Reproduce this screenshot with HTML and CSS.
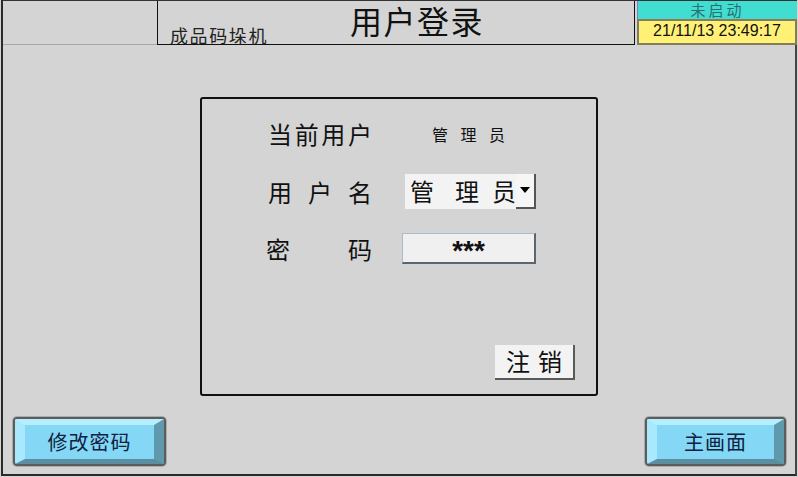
FILE: index.html
```html
<!DOCTYPE html>
<html lang="zh-CN">
<head>
<meta charset="utf-8">
<title>用户登录</title>
<link rel="stylesheet" href="styles.css">
</head>
<body>
<div class="screen">
  <div class="header">
    <div class="hleft"></div>
    <div class="htitle">
      <span class="subtitle">成品码垛机</span>
      <span class="title">用户登录</span>
    </div>
    <div class="status">
      <div class="state">未启动</div>
      <div class="clock">21/11/13 23:49:17</div>
    </div>
  </div>
  <div class="main">
    <div class="panel">
      <div class="form">
        <div class="lbl"><span>当</span><span>前</span><span>用</span><span>户</span></div>
        <div class="cur"><span>管</span><span>理</span><span>员</span></div>
        <div class="lbl"><span>用</span><span>户</span><span>名</span></div>
        <div class="select">
          <div class="sel-text"><span>管</span><span>理</span><span>员</span></div>
          <div class="sel-arrow"><span class="tri"></span></div>
        </div>
        <div class="lbl lbl-wide"><span>密</span><span>码</span></div>
        <div class="pwd">***</div>
      </div>
      <div class="logout">注销</div>
    </div>
    <div class="footer">
      <div class="btn btn-left"><div class="btn-face">修改密码</div></div>
      <div class="btn btn-right"><div class="btn-face">主画面</div></div>
    </div>
  </div>
</div>
</body>
</html>
```
FILE: styles.css
```css
html, body {
  margin: 0;
  padding: 0;
  background: #d4d4d4;
}
body {
  width: 798px;
  height: 477px;
  overflow: hidden;
  font-family: "Noto Sans CJK SC", "Noto Sans", sans-serif;
  color: #111;
}
.screen {
  margin-left: 1px;
  width: 796px;
  height: 476px;
  display: flex;
  flex-direction: column;
  border-left: 2px solid #2a2a2a;
  box-sizing: border-box;
}
.header {
  display: flex;
  height: 45px;
  border-top: 1px solid #333;
  box-sizing: border-box;
}
.hleft {
  width: 154px;
  border-bottom: 1px solid #a8a8a8;
}
.htitle {
  width: 478px;
  border-left: 1px solid #111;
  border-right: 1px solid #111;
  border-bottom: 1px solid #111;
  box-sizing: border-box;
  display: flex;
  padding-left: 12px;
}
.subtitle {
  align-self: flex-end;
  font-size: 18px;
  line-height: 22px;
  letter-spacing: 1.6px;
  color: #222;
  margin-bottom: -2px;
}
.title {
  margin-left: 82px;
  font-size: 32px;
  line-height: 36px;
  letter-spacing: 1.5px;
  color: #111;
  margin-top: 1px;
}
.status {
  width: 160px;
  margin-left: 2px;
  display: flex;
  flex-direction: column;
}
.state {
  height: 18px;
  background: #40ddd0;
  border-left: 1px solid #7a7ad8;
  color: #2a7070;
  font-size: 15px;
  line-height: 18px;
  text-align: center;
  letter-spacing: 3px;
}
.clock {
  flex: 1;
  background: #fff076;
  border: 2px solid #857c5c;
  font-family: "Liberation Sans", Arial, sans-serif;
  font-size: 16px;
  line-height: 20px;
  text-align: center;
  color: #111;
}
.main {
  flex: 1;
  display: flex;
  flex-direction: column;
  border-right: 2px solid #444;
  border-bottom: 2px solid #2a2a2a;
}
.panel {
  margin: 52px auto 0;
  width: 398px;
  height: 299px;
  box-sizing: border-box;
  border: 2px solid #111;
  border-radius: 3px;
  display: flex;
  flex-direction: column;
}
.form {
  display: grid;
  grid-template-columns: 104px 134px;
  grid-template-rows: 32px 35px 31px;
  column-gap: 30px;
  row-gap: 24px;
  padding: 19px 0 0 66px;
  align-items: center;
}
.lbl {
  display: flex;
  justify-content: space-between;
  font-size: 24px;
  line-height: 30px;
}
.lbl-wide {
  margin-left: -2px;
}
.cur {
  display: flex;
  justify-content: space-between;
  width: 73px;
  margin-left: 30px;
  font-size: 16px;
  line-height: 20px;
}
.select {
  margin-left: 3px;
  width: 131px;
  height: 35px;
  display: flex;
  background: #f3f3f3;
  box-sizing: border-box;
}
.sel-text {
  width: 111px;
  box-sizing: border-box;
  padding-left: 5px;
  display: flex;
  justify-content: space-between;
  font-size: 24px;
  line-height: 34px;
}
.sel-text span:nth-child(2) {
  margin-left: 8px;
}
.sel-arrow {
  flex: 1;
  background: #f6f6f6;
  border-right: 2px solid #555;
  border-bottom: 2px solid #555;
  display: flex;
  align-items: center;
  justify-content: center;
}
.tri {
  width: 0;
  height: 0;
  border-left: 5px solid transparent;
  border-right: 5px solid transparent;
  border-top: 6px solid #000;
  margin-top: -2px;
}
.pwd {
  width: 134px;
  height: 31px;
  box-sizing: border-box;
  background: #f0f0f0;
  border-top: 1px solid #a9bccc;
  border-left: 1px solid #a9bccc;
  border-right: 2px solid #5b6670;
  border-bottom: 2px solid #5b6670;
  font-family: "Liberation Sans", Arial, sans-serif;
  font-weight: bold;
  font-size: 28px;
  line-height: 34px;
  text-align: center;
}
.logout {
  margin-top: auto;
  align-self: flex-end;
  margin-right: 21px;
  margin-bottom: 14px;
  width: 80px;
  height: 35px;
  box-sizing: border-box;
  background: #f3f3f3;
  border-right: 2px solid #5a5a5a;
  border-bottom: 2px solid #5a5a5a;
  font-size: 24px;
  line-height: 32px;
  text-align: center;
  letter-spacing: 8px;
  padding-left: 8px;
}
.footer {
  margin-top: auto;
  display: flex;
  justify-content: space-between;
  padding: 0 9px 8px 10px;
}
.btn {
  height: 49px;
  box-sizing: border-box;
  border: 2px solid #5c5c5c;
  border-radius: 4px;
  box-shadow: 0 0 0 1px #ababab;
}
.btn-left {
  width: 153px;
}
.btn-right {
  width: 141px;
}
.btn-face {
  height: 100%;
  box-sizing: border-box;
  border-style: solid;
  border-width: 6px 10px 5px 10px;
  border-color: #b4eeff #5f99ac #5b8ea0 #a9e9fd;
  background: #84d8f6;
  border-radius: 2px;
  color: #0e2240;
  font-size: 20px;
  line-height: 34px;
  text-align: center;
  letter-spacing: 1px;
}
```
